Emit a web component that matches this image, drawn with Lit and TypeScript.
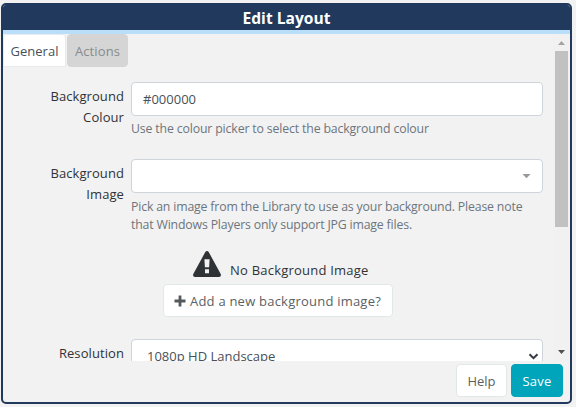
import { LitElement, html, css } from "lit";
import { customElement, property } from "lit/decorators.js";

@customElement("form-row")
export class FormRow extends LitElement {
  @property() label = "";
  static styles = css`
    :host { display: grid; grid-template-columns: 81px 412px; column-gap: 7px; padding-left: 40px; }
    .label { padding-top: 4px; text-align: right; line-height: 21px; color: #303336; letter-spacing: 0.08px; }
  `;
  render() {
    return html`<label class="label">${this.label}</label><div><slot></slot></div>`;
  }
}

@customElement("app-root")
export class AppRoot extends LitElement {
  static styles = css`
    :host { display: block; height: 407px; box-sizing: border-box; padding: 3px 4px 3px 1px; background: #f2f2f2;
      font: 13px "Open Sans", "Noto Sans", sans-serif; color: #303336; }
    * { box-sizing: border-box; }
    .modal { display: flex; flex-direction: column; width: 571px; height: 401px; border: 2px solid #20395c;
      border-radius: 5px; background: #f2f2f2; overflow: hidden; }
    .header { flex: none; height: 29px; background: #20395c; border-bottom: 4px solid #b8def9; color: #fff;
      text-align: center; font-weight: 700; font-size: 15.6px; line-height: 26px; }
    .body { flex: none; height: 327px; display: flex; justify-content: space-between; overflow: hidden; }
    .content { width: 545px; height: 327px; overflow: hidden; }
    .tabs { display: flex; gap: 1px; height: 33px; margin-bottom: 15px; }
    .tab { height: 33px; border: 1px solid #e7ebee; border-radius: 4px 4px 0 0; background: #fff; text-align: center;
      line-height: 32px; width: 63px; color: #495057; }
    .tab.off { width: 61px; border-radius: 4px; background: #d5d5d5; border-color: #d5d5d5; color: #868b8f; letter-spacing: 0.1px; }
    .field { display: flex; align-items: center; justify-content: space-between; height: 34px; border: 1px solid #ced4da;
      border-radius: 4px; background: #fff; padding: 0 11px; color: #495057; }
    .hint { color: #6c757d; font-size: 12.3px; line-height: 18px; margin-top: 4px; white-space: nowrap; letter-spacing: -0.15px; }
    .colour { height: 77px; }
    .image { height: 87px; }
    .image .hint { margin-top: 5px; letter-spacing: -0.17px; }
    .empty { display: flex; align-items: flex-end; gap: 9px; height: 33px; padding-left: 190px; letter-spacing: 0.22px; }
    .empty svg { margin-bottom: 2px; }
    .btn { display: flex; align-items: center; justify-content: center; height: 33px; border: 1px solid #e2e8ea;
      border-radius: 4px; background: #fff; color: #5b5f63; }
    .add { width: 230px; margin: 5px 0 22px 160px; padding-right: 1px; gap: 4px; letter-spacing: 0.22px; }
    .select { padding: 0 3px 0 15px; }
    .scroll { width: 17px; background: #f1f1f1; display: flex; flex-direction: column; align-items: center; }
    .arrow { height: 17px; display: block; }
    .thumb { width: 13px; height: 176px; background: #c1c1c1; margin-bottom: 117px; }
    .footer { display: flex; justify-content: flex-end; gap: 4px; padding: 3px 7px 0 0; }
    .help { width: 51px; }
    .save { width: 52px; background: #00a5bb; border-color: #00a5bb; color: #fff; letter-spacing: 0.2px; }
  `;
  render() {
    return html`
      <div class="modal">
        <div class="header">Edit Layout</div>
        <div class="body">
          <div class="content">
            <div class="tabs"><div class="tab">General</div><div class="tab off">Actions</div></div>
            <form-row class="colour" label="Background Colour">
              <div class="field">#000000</div>
              <div class="hint">Use the colour picker to select the background colour</div>
            </form-row>
            <form-row class="image" label="Background Image">
              <div class="field"><span></span>
                <svg width="9" height="5" viewBox="0 0 9 5"><path d="M0.5 0H8.5L4.5 4.2Z" fill="#999" /></svg>
              </div>
              <div class="hint">Pick an image from the Library to use as your background. Please note<br />that Windows Players only support JPG image files.</div>
            </form-row>
            <div class="empty">
              <svg width="28" height="26" viewBox="0 0 28 26">
                <path fill="#303336" fill-rule="evenodd" d="M12.3 1C13 -.3 15 -.3 15.7 1L27.7 23C28.4 24.5 27.5 26 26 26H2C.5 26 -.4 24.5 .3 23ZM11.4 8.2 11.9 16.3H16.1L16.6 8.200ZM12 18.300V22.300H16V18.300Z" />
              </svg>
              <span>No Background Image</span>
            </div>
            <div class="btn add">
              <svg width="12" height="12" viewBox="0 0 12 12"><path d="M6 .5V11.500M.5 6H11.500" stroke="#55595c" stroke-width="2.800" /></svg>
              <span>Add a new background image?</span>
            </div>
            <form-row label="Resolution">
              <div class="field select"><span>1080p HD Landscape</span>
                <svg width="11" height="7" viewBox="0 0 11 7"><path d="M1.500 1.200 5.500 5.200 9.500 1.200" fill="none" stroke="#343a40" stroke-width="2" /></svg>
              </div>
            </form-row>
          </div>
          <div class="scroll">
            <svg class="arrow" width="17" height="17" viewBox="0 0 17 17"><path d="M5 11H12L8.500 7Z" fill="#a3a3a3" /></svg>
            <div class="thumb"></div>
            <svg class="arrow" width="17" height="17" viewBox="0 0 17 17"><path d="M5 6H12L8.500 10Z" fill="#505050" /></svg>
          </div>
        </div>
        <div class="footer"><div class="btn help">Help</div><div class="btn save">Save</div></div>
      </div>`;
  }
}
